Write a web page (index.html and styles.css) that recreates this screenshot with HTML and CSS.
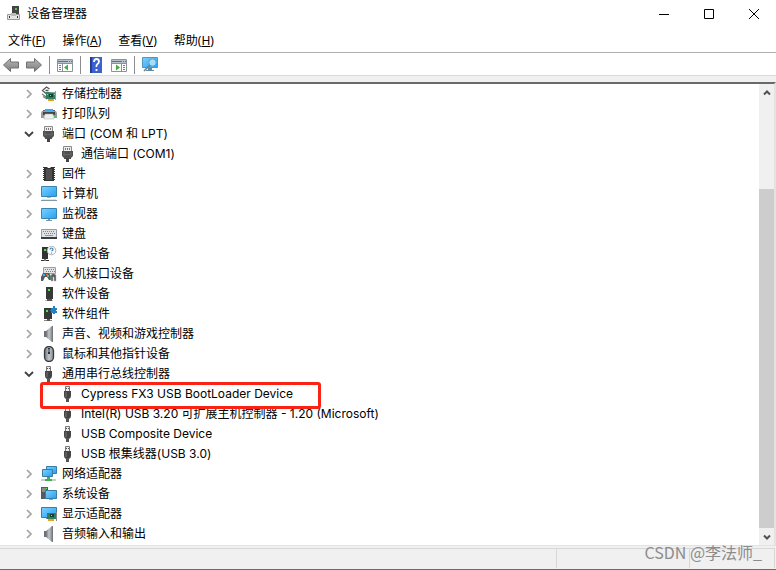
FILE: index.html
```html
<!DOCTYPE html>
<html lang="zh-CN">
<head>
    <meta charset="UTF-8">
    <meta name="viewport" content="width=device-width, initial-scale=1.0">
    <title>设备管理器</title>
    <link rel="stylesheet" href="styles.css">
</head>
<body>
    <svg class="sprite" aria-hidden="true">
        <defs>
            <linearGradient id="blue" x1="0" y1="0" x2="1" y2="1">
                <stop offset="0" stop-color="#7fd0ff"/>
                <stop offset="1" stop-color="#22a0f5"/>
            </linearGradient>
            <linearGradient id="metal" x1="0" y1="0" x2="1" y2="0">
                <stop offset="0" stop-color="#6d7378"/>
                <stop offset=".5" stop-color="#c3c8cc"/>
                <stop offset="1" stop-color="#83898e"/>
            </linearGradient>
            <linearGradient id="arrow" x1="0" y1="0" x2="0" y2="1">
                <stop offset="0" stop-color="#b8b8b8"/>
                <stop offset="1" stop-color="#7c7c7c"/>
            </linearGradient>
        </defs>
        <symbol id="chevron-right" viewBox="0 0 10 10">
            <path d="M3 1l4 4-4 4" fill="none" stroke="#a3a3a3" stroke-width="1.7"/>
        </symbol>
        <symbol id="chevron-down" viewBox="0 0 10 10">
            <path d="M1 3l4 4 4-4" fill="none" stroke="#404040" stroke-width="1.8"/>
        </symbol>
        <symbol id="storage" viewBox="0 0 16 16">
            <path d="M8.500 3L5.500 1 1.500 4.500l4 3.500 2-1.500M4.500 4.500h3" fill="none" stroke="#555" stroke-width="1.3"/>
            <path d="M1 8l5 3.500M2 10.500l4 2.500" stroke="#777" stroke-width="1.2"/>
            <path d="M5 6l10 .5V13H5z" fill="#2d8060"/>
            <path d="M14.500 5v9" stroke="#999"/>
            <path d="M8 8h4v3H8z" fill="#173f35"/>
            <path d="M6 8h1v1H6zM13 8h1v1h-1zM9 9h1v1H9z" fill="#8cdaa8"/>
            <path d="M7 13h6v2H7z" fill="#f2a21a"/>
            <path d="M9 13v2M11 13v2" stroke="#ce7600" stroke-width=".5"/>
        </symbol>
        <symbol id="printer" viewBox="0 0 16 16">
            <path d="M4 3h8v3H4z" fill="#3ba8ef"/>
            <path d="M2 4h2v2H2zM12 4h2v2h-2z" fill="#666"/>
            <path d="M1 5h14l1 2v5h-3v-2H3v2H0V7z" fill="#999"/>
            <path d="M2 6h12v3H2z" fill="#444"/>
            <path d="M4 8h8l1 5H3z" fill="#eaf1f5" stroke="#aaa" stroke-width=".5"/>
            <path d="M13 10h1v1h-1z" fill="#45ce63"/>
        </symbol>
        <symbol id="port" viewBox="0 0 16 16">
            <path d="M3.500 .5h8v5h-8z" fill="#eee" stroke="#888"/>
            <path d="M5.500 2v2M7.500 2v2M9.500 2v2" stroke="#777"/>
            <path d="M2 5h11v5l-2 2v1H4v-1l-2-2z" fill="#505050"/>
            <path d="M4 6v4M11 6v4" stroke="#777" stroke-width=".7"/>
            <path d="M4 8.500h7" stroke="#666"/>
            <path d="M6 12h3v4H6z" fill="#444"/>
        </symbol>
        <symbol id="chip" viewBox="0 0 16 16">
            <path d="M2.500 1v14M13.500 1v14" stroke="#333" stroke-dasharray="1 1"/>
            <path d="M3 1h3.500v1h3V1H13v14H3z" fill="#333"/>
            <path d="M5 3h6v11H5z" fill="#505050"/>
        </symbol>
        <symbol id="computer" viewBox="0 0 16 16">
            <path d="M.5 .5h15v10H.5z" fill="url(#blue)" stroke="#3985ad"/>
            <path d="M6 11h4v1H6z" fill="#9db4c3"/>
            <path d="M1 13h14l1 2H0z" fill="#dbe5ea"/>
            <path d="M0 14.500h16" stroke="#8398a5"/>
        </symbol>
        <symbol id="monitor" viewBox="0 0 16 16">
            <path d="M.5 2.500h15v10H.5z" fill="url(#blue)" stroke="#3985ad"/>
            <path d="M7 13h2v1H7zM5 14h6v1H5z" fill="#7b98aa"/>
        </symbol>
        <symbol id="keyboard" viewBox="0 0 16 16">
            <path d="M.5 3.500h15v8H.5z" fill="#dfe2e4" stroke="#969ca1"/>
            <path d="M2 5.500h12M3 7.500h11" stroke="#7c858b" stroke-dasharray="1 1"/>
            <path d="M4 9.500h8" stroke="#929a9f"/>
            <path d="M0 11h16v2H0z" fill="#3b3e40"/>
        </symbol>
        <symbol id="unknown" viewBox="0 0 16 16">
            <path d="M1 1h6v12H1zM0 14h8v1H0z" fill="#333"/>
            <path d="M3 13h2v2H3z" fill="#777"/>
            <path d="M3 3h2v2H3z" fill="#48e548"/>
            <circle cx="10.500" cy="4.500" r="4.300" fill="#fff" stroke="#a8b0b6"/>
            <path d="M9 3.500q0-1.500 1.500-1.500T12 3.500q0 1-1.500 1.500M10.500 6.500v1" fill="none" stroke="#347fae" stroke-width="1.200"/>
        </symbol>
        <symbol id="hid" viewBox="0 0 16 16">
            <path d="M2.500 1.500h12v6h-12z" fill="#e2e5e7" stroke="#979fa4"/>
            <path d="M4 3.500h9M5 5.500h9" stroke="#788187" stroke-dasharray="1 1"/>
            <path d="M2 7h6l2 3v4H8l-2-3H4l-2 4H0v-4z" fill="#535b61"/>
            <path d="M10 15V9q2-3 5 0v6h-2v-4h-1v4z" fill="#5b5b5b" stroke="#bbb" stroke-width=".5"/>
            <path d="M2 8h2v2H2z" fill="#45aaf2"/>
            <path d="M5 8h2v1H5z" fill="#f06b32"/>
            <path d="M6 9h2v2H6z" fill="#45c95c"/>
        </symbol>
        <symbol id="tower" viewBox="0 0 16 16">
            <path d="M5 1h7v12H5z" fill="#383838"/>
            <path d="M7 3h2v2H7z" fill="#45ee45"/>
            <path d="M4 14h8v1H4z" fill="#bbb"/>
            <path d="M6 13h5v2H6z" fill="#555"/>
        </symbol>
        <symbol id="component" viewBox="0 0 16 16">
            <path d="M3 2h8v11H3z" fill="#383838"/>
            <path d="M5 4h2v2H5z" fill="#45ee45"/>
            <path d="M3 14h8v1H3z" fill="#888"/>
            <path d="M6 13h3v2H6z" fill="#555"/>
            <path d="M10 2h2V0h2v2h2v2h-1v1h1v2h-2v1h-2V7h-2V5H9V4h1z" fill="#2681bd"/>
        </symbol>
        <symbol id="speaker" viewBox="0 0 16 16">
            <path d="M3 5h3v6H3z" fill="#6a7075"/>
            <path d="M5 5l6-5v16l-6-5z" fill="url(#metal)"/>
            <path d="M11.500 0v16" stroke="#777"/>
        </symbol>
        <symbol id="mouse" viewBox="0 0 16 16">
            <rect x="3.500" y=".5" width="9" height="15" rx="4.500" fill="url(#metal)" stroke="#343a3f" stroke-width="1.300"/>
            <path d="M7 2h2v6H7z" fill="#272f37"/>
            <path d="M8 3v3" stroke="#b0c6d8"/>
        </symbol>
        <symbol id="usb" viewBox="0 0 16 16">
            <path d="M5.500 .5h4v5h-4z" fill="#eee" stroke="#777"/>
            <path d="M6.500 2v1M8.500 2v1" stroke="#555"/>
            <path d="M4 5h7v5q0 2-2 3H6q-2-1-2-3z" fill="#444"/>
            <path d="M6 6v5" stroke="#777"/>
            <path d="M6 12h3v4H6z" fill="#555"/>
        </symbol>
        <symbol id="network" viewBox="0 0 16 16">
            <path d="M5.500 .5h10v7h-10z" fill="url(#blue)" stroke="#397da5"/>
            <path d="M1.500 3.500h10v7h-10z" fill="url(#blue)" stroke="#397da5"/>
            <path d="M0 13h15v2H0z" fill="#ccc"/>
            <path d="M6 11h3v2h2v2H4v-2h2z" fill="#39b34b"/>
        </symbol>
        <symbol id="system" viewBox="0 0 16 16">
            <path d="M0 1h7v12H0z" fill="#555c61"/>
            <path d="M1 3h4M1 5h3" stroke="#b9bfc3"/>
            <path d="M5 2h1v1H5z" fill="#4ee64e"/>
            <path d="M4.500 4.500h11v8h-11z" fill="url(#blue)" stroke="#397da5"/>
            <path d="M8 13h4v1H8z" fill="#8ba5b5"/>
        </symbol>
        <symbol id="display" viewBox="0 0 16 16">
            <path d="M.5 1.500h15v10H.5z" fill="url(#blue)" stroke="#397da5"/>
            <path d="M5 12h3v1H5z" fill="#789"/>
            <path d="M6 7h9v6H6z" fill="#2d8060"/>
            <path d="M9 8h4v3H9z" fill="#173f35"/>
            <path d="M10 9h1v1h-1z" fill="#8cdaa8"/>
            <path d="M15.500 6v9" stroke="#888"/>
            <path d="M7 13h6v2H7z" fill="#f2a21a"/>
        </symbol>
    </svg>

    <header class="titlebar">
        <svg class="app-icon" viewBox="0 0 16 16" aria-hidden="true">
            <path d="M6 0h7v8H6z" fill="#444"/>
            <path d="M9 2h2v2H9z" fill="#4ccb58"/>
            <path d="M1.500 8.500h12v5h-12z" fill="#e5e5e5" stroke="#999"/>
            <path d="M5 7h5v3H5z" fill="#bbb"/>
            <path d="M3 10h1v2H3zM11 10h1v2h-1z" fill="#333"/>
        </svg>
        <h1>设备管理器</h1>
        <button class="caption" type="button" aria-label="最小化">
            <svg viewBox="0 0 12 12"><path d="M1 6.500h10"/></svg>
        </button>
        <button class="caption" type="button" aria-label="最大化">
            <svg viewBox="0 0 12 12"><path d="M1.500 1.500h9v9h-9z"/></svg>
        </button>
        <button class="caption" type="button" aria-label="关闭">
            <svg viewBox="0 0 12 12"><path d="M1 1l10 10M11 1L1 11"/></svg>
        </button>
    </header>

    <nav class="menubar">
        <button type="button">文件(<u>F</u>)</button>
        <button type="button">操作(<u>A</u>)</button>
        <button type="button">查看(<u>V</u>)</button>
        <button type="button">帮助(<u>H</u>)</button>
    </nav>

    <div class="toolbar">
        <button type="button" aria-label="后退">
            <svg viewBox="0 0 16 16"><path d="M.5 8L7.500 1.500v3.500h8v6h-8v3.500z" fill="url(#arrow)" stroke="#707070"/></svg>
        </button>
        <button type="button" aria-label="前进">
            <svg viewBox="0 0 16 16"><path d="M15.500 8L8.500 1.500v3.500h-8v6h8v3.500z" fill="url(#arrow)" stroke="#707070"/></svg>
        </button>
        <span class="separator"></span>
        <button type="button" aria-label="显示/隐藏控制台树">
            <svg viewBox="0 0 16 16">
                <path d="M.5 2.500h15v12H.5z" fill="#fff" stroke="#8b929b"/>
                <path d="M1 3h14v3H1z" fill="#b8c0ca"/>
                <path d="M1 4.500h10M12 4.500h1M14 4.500h1" stroke="#68717d"/>
                <path d="M0 6.500h16M5.500 7v7" stroke="#8b929b"/>
                <path d="M2 8.500h2M2 10.500h2M2 12.500h2" stroke="#6380a0"/>
                <path d="M11 7.500v6L7 10.500z" fill="#40ad35"/>
            </svg>
        </button>
        <span class="separator"></span>
        <button type="button" aria-label="帮助">
            <svg viewBox="0 0 16 16">
                <path d="M2 0h12v16H2z" fill="#3b62ce"/>
                <path d="M2 0h2v16H2z" fill="#233e90"/>
                <path d="M6 5q0-3 2.500-3T11 4.500q0 1.500-1.500 2.500T8.500 10M8.500 12v2" fill="none" stroke="#fff" stroke-width="1.800"/>
            </svg>
        </button>
        <button type="button" aria-label="操作窗格">
            <svg viewBox="0 0 16 16">
                <path d="M.5 2.500h15v12H.5z" fill="#fff" stroke="#8b929b"/>
                <path d="M1 3h14v3H1z" fill="#b8c0ca"/>
                <path d="M1 4.500h10M12 4.500h1M14 4.500h1" stroke="#68717d"/>
                <path d="M0 6.500h16M10.500 7v7" stroke="#8b929b"/>
                <path d="M12 8.500h2M12 10.500h2M12 12.500h2" stroke="#6380a0"/>
                <path d="M5 7.500v6l4-3z" fill="#40ad35"/>
            </svg>
        </button>
        <span class="separator"></span>
        <button type="button" aria-label="扫描检测硬件改动">
            <svg viewBox="0 0 16 16">
                <path d="M.5 .5h15v10H.5z" fill="url(#blue)" stroke="#5398bc"/>
                <path d="M6 11h4v2H6zM4 13h8v1H4z" fill="#5f8ba5"/>
                <circle cx="10.500" cy="5.500" r="3.700" fill="#a8ddf8" stroke="#7699aa"/>
                <path d="M8 8l-6 6" stroke="#698393" stroke-width="1.600"/>
            </svg>
        </button>
    </div>

    <main class="pane">
        <ul class="tree">
            <li><div class="row"><button class="toggle" type="button" aria-label="展开"><svg><use href="#chevron-right"/></svg></button><svg class="icon"><use href="#storage"/></svg>存储控制器</div></li>
            <li><div class="row"><button class="toggle" type="button" aria-label="展开"><svg><use href="#chevron-right"/></svg></button><svg class="icon"><use href="#printer"/></svg>打印队列</div></li>
            <li>
                <div class="row"><button class="toggle" type="button" aria-label="折叠"><svg><use href="#chevron-down"/></svg></button><svg class="icon"><use href="#port"/></svg>端口 (COM 和 LPT)</div>
                <ul>
                    <li class="row"><svg class="icon"><use href="#port"/></svg>通信端口 (COM1)</li>
                </ul>
            </li>
            <li><div class="row"><button class="toggle" type="button" aria-label="展开"><svg><use href="#chevron-right"/></svg></button><svg class="icon"><use href="#chip"/></svg>固件</div></li>
            <li><div class="row"><button class="toggle" type="button" aria-label="展开"><svg><use href="#chevron-right"/></svg></button><svg class="icon"><use href="#computer"/></svg>计算机</div></li>
            <li><div class="row"><button class="toggle" type="button" aria-label="展开"><svg><use href="#chevron-right"/></svg></button><svg class="icon"><use href="#monitor"/></svg>监视器</div></li>
            <li><div class="row"><button class="toggle" type="button" aria-label="展开"><svg><use href="#chevron-right"/></svg></button><svg class="icon"><use href="#keyboard"/></svg>键盘</div></li>
            <li><div class="row"><button class="toggle" type="button" aria-label="展开"><svg><use href="#chevron-right"/></svg></button><svg class="icon"><use href="#unknown"/></svg>其他设备</div></li>
            <li><div class="row"><button class="toggle" type="button" aria-label="展开"><svg><use href="#chevron-right"/></svg></button><svg class="icon"><use href="#hid"/></svg>人机接口设备</div></li>
            <li><div class="row"><button class="toggle" type="button" aria-label="展开"><svg><use href="#chevron-right"/></svg></button><svg class="icon"><use href="#tower"/></svg>软件设备</div></li>
            <li><div class="row"><button class="toggle" type="button" aria-label="展开"><svg><use href="#chevron-right"/></svg></button><svg class="icon"><use href="#component"/></svg>软件组件</div></li>
            <li><div class="row"><button class="toggle" type="button" aria-label="展开"><svg><use href="#chevron-right"/></svg></button><svg class="icon"><use href="#speaker"/></svg>声音、视频和游戏控制器</div></li>
            <li><div class="row"><button class="toggle" type="button" aria-label="展开"><svg><use href="#chevron-right"/></svg></button><svg class="icon"><use href="#mouse"/></svg>鼠标和其他指针设备</div></li>
            <li>
                <div class="row"><button class="toggle" type="button" aria-label="折叠"><svg><use href="#chevron-down"/></svg></button><svg class="icon"><use href="#usb"/></svg>通用串行总线控制器</div>
                <ul>
                    <li class="row marked"><svg class="icon"><use href="#usb"/></svg>Cypress FX3 USB BootLoader Device</li>
                    <li class="row"><svg class="icon"><use href="#usb"/></svg>Intel(R) USB 3.20 可扩展主机控制器 - 1.20 (Microsoft)</li>
                    <li class="row"><svg class="icon"><use href="#usb"/></svg>USB Composite Device</li>
                    <li class="row"><svg class="icon"><use href="#usb"/></svg>USB 根集线器(USB 3.0)</li>
                </ul>
            </li>
            <li><div class="row"><button class="toggle" type="button" aria-label="展开"><svg><use href="#chevron-right"/></svg></button><svg class="icon"><use href="#network"/></svg>网络适配器</div></li>
            <li><div class="row"><button class="toggle" type="button" aria-label="展开"><svg><use href="#chevron-right"/></svg></button><svg class="icon"><use href="#system"/></svg>系统设备</div></li>
            <li><div class="row"><button class="toggle" type="button" aria-label="展开"><svg><use href="#chevron-right"/></svg></button><svg class="icon"><use href="#display"/></svg>显示适配器</div></li>
            <li><div class="row"><button class="toggle" type="button" aria-label="展开"><svg><use href="#chevron-right"/></svg></button><svg class="icon"><use href="#speaker"/></svg>音频输入和输出</div></li>
        </ul>
        <div class="scrollbar">
            <button type="button" aria-label="向上滚动"><svg viewBox="0 0 10 10"><path d="M2 6.500l3-3 3 3"/></svg></button>
            <div class="track"><div class="thumb"></div></div>
            <button type="button" aria-label="向下滚动"><svg viewBox="0 0 10 10"><path d="M2 3.500l3 3 3-3"/></svg></button>
        </div>
    </main>

    <footer class="statusbar">
        <span class="cell cell-main"></span>
        <span class="cell cell-wide"></span>
        <span class="cell cell-end"></span>
        <span class="watermark">CSDN @李法师_</span>
    </footer>
</body>
</html>
```
FILE: styles.css
```css
*, *::after {
    box-sizing: border-box;
}
body {
    margin: 0;
    min-height: 100vh;
    display: flex;
    flex-direction: column;
    background-color: #fff;
    color: #000;
    font-family: "Noto Sans", "Noto Sans CJK SC", sans-serif;
    font-size: 12px;
    line-height: 20px;
}
button {
    padding: 0;
    border: 0;
    background: none;
    color: inherit;
    font: inherit;
}
svg {
    display: block;
    flex: none;
}
ul {
    margin: 0;
    padding: 0;
    list-style: none;
}
.sprite {
    position: absolute;
    width: 0;
    height: 0;
}

/* title bar */
.titlebar {
    display: flex;
    align-items: center;
    height: 28px;
    padding-left: 6px;
}
.app-icon {
    width: 16px;
    height: 16px;
}
h1 {
    flex: 1;
    margin: 0 0 0 5px;
    font-size: 12px;
    font-weight: normal;
}
.caption {
    display: flex;
    justify-content: center;
    width: 45px;
}
.caption svg {
    width: 12px;
    height: 12px;
    fill: none;
    stroke: #000;
}

/* menu and toolbar */
.menubar {
    display: flex;
    gap: 17px;
    height: 25px;
    padding: 3px 8px;
    border-bottom: 1px solid #b0b0b0;
}
.toolbar {
    display: flex;
    align-items: center;
    gap: 7px;
    height: 23px;
    padding: 2px 0 0 3px;
    border-bottom: 1px solid #dadada;
}
.toolbar svg {
    width: 16px;
    height: 16px;
}
.separator {
    width: 1px;
    height: 18px;
    background-color: #8c8c8c;
}

/* device tree */
.pane {
    flex: 1;
    display: flex;
    margin-top: 6px;
    border-top: 2px solid #696969;
    border-right: 2px solid #e3e3e3;
    outline: 6px solid #f0f0f0;
    background-color: #fff;
}
.tree {
    flex: 1;
    min-width: 0;
    padding-left: 24px;
    font-family: Inter, "Noto Sans CJK SC", sans-serif;
}
.tree ul {
    padding-left: 36px;
}
.row {
    display: flex;
    align-items: center;
    height: 20px;
    white-space: nowrap;
}
.toggle {
    margin-right: 7px;
}
.toggle svg {
    width: 10px;
    height: 10px;
}
.icon {
    width: 16px;
    height: 16px;
    margin-right: 5px;
}
.marked {
    position: relative;
}
.marked::after {
    content: "";
    position: absolute;
    z-index: 1;
    top: -2px;
    left: -20px;
    width: 281px;
    height: 27px;
    border: 3px solid #fa2314;
    border-radius: 3px;
}

/* scroll bar */
.scrollbar {
    display: flex;
    flex-direction: column;
    width: 15px;
    background-color: #f0f0f0;
}
.scrollbar button {
    display: flex;
    align-items: center;
    justify-content: center;
    height: 17px;
}
.scrollbar svg {
    width: 10px;
    height: 10px;
    fill: none;
    stroke: #505050;
    stroke-width: 2;
}
.track {
    flex: 1;
    display: flex;
    align-items: flex-end;
}
.thumb {
    width: 100%;
    height: 79.5%;
    background-color: #cdcdcd;
}

/* status bar */
.statusbar {
    position: relative;
    display: flex;
    height: 25px;
    padding: 2px 1px 1px 0;
    border-top: 1px solid #e3e3e3;
    border-bottom: 1px solid #696969;
    background-color: #f0f0f0;
}
.cell {
    border-top: 1px solid #d7d7d7;
    border-right: 1px solid #d7d7d7;
}
.cell-main {
    flex: 1;
}
.cell-wide {
    width: 133px;
}
.cell-end {
    width: 85px;
}
.watermark {
    position: absolute;
    top: -4px;
    right: 14px;
    color: #8c8c8c;
    font-family: "Noto Sans CJK SC", sans-serif;
    font-size: 16px;
}
```
